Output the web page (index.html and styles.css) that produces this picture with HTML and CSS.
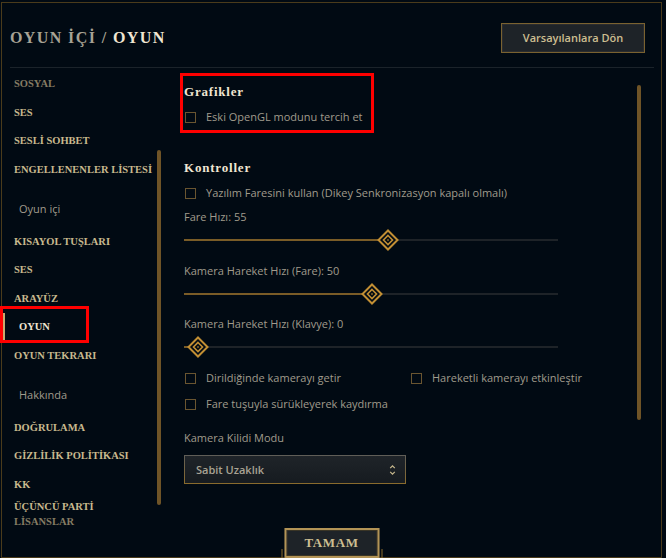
FILE: index.html
```html
<!DOCTYPE html>
<html lang="tr">
<head>
<meta charset="utf-8">
<title>Oyun İçi / Oyun</title>
<link rel="stylesheet" href="styles.css">
</head>
<body>
<div class="frame">
  <header class="header">
    <h1 class="title"><span class="crumb">OYUN İÇİ /</span> <span class="current">OYUN</span></h1>
    <button class="btn-reset">Varsayılanlara Dön</button>
  </header>
  <div class="divider"></div>
  <div class="body">
    <aside class="sidebar">
      <nav class="nav">
        <div class="nav-item dim">SOSYAL</div>
        <div class="nav-item">SES</div>
        <div class="nav-item">SESLİ SOHBET</div>
        <div class="nav-item">ENGELLENENLER LİSTESİ</div>
        <div class="nav-group">Oyun içi</div>
        <div class="nav-item">KISAYOL TUŞLARI</div>
        <div class="nav-item">SES</div>
        <div class="nav-item">ARAYÜZ</div>
        <div class="nav-item active">OYUN</div>
        <div class="nav-item">OYUN TEKRARI</div>
        <div class="nav-group">Hakkında</div>
        <div class="nav-item">DOĞRULAMA</div>
        <div class="nav-item">GİZLİLİK POLİTİKASI</div>
        <div class="nav-item">KK</div>
        <div class="nav-item multi">ÜÇÜNCÜ PARTİ<br><span class="dim">LİSANSLAR</span></div>
      </nav>
      <div class="side-scroll"><div class="thumb side-thumb"></div></div>
    </aside>

    <main class="content">
      <section class="section highlight">
        <h2 class="section-title">Grafikler</h2>
        <label class="check"><span class="box"></span>Eski OpenGL modunu tercih et</label>
      </section>

      <section class="section controls">
        <h2 class="section-title">Kontroller</h2>
        <label class="check"><span class="box"></span>Yazılım Faresini kullan (Dikey Senkronizasyon kapalı olmalı)</label>

        <div class="slider-block first">
          <div class="field-label">Fare Hızı: 55</div>
          <div class="slider" style="--pos: 54.5%">
            <div class="track"><div class="fill"></div></div>
            <svg class="knob" viewBox="0 0 22 22" width="22" height="22"><polygon points="11,1.5 20.5,11 11,20.5 1.5,11" fill="#010a13" stroke="#c28f34" stroke-width="2"/><polygon points="11,6.5 15.5,11 11,15.5 6.5,11" fill="none" stroke="#c28f34" stroke-width="1.6"/><polygon points="11,9.8 12.2,11 11,12.2 9.8,11" fill="#8a6a2c"/></svg>
          </div>
        </div>

        <div class="slider-block">
          <div class="field-label">Kamera Hareket Hızı (Fare): 50</div>
          <div class="slider" style="--pos: 50.3%">
            <div class="track"><div class="fill"></div></div>
            <svg class="knob" viewBox="0 0 22 22" width="22" height="22"><polygon points="11,1.5 20.5,11 11,20.5 1.5,11" fill="#010a13" stroke="#c28f34" stroke-width="2"/><polygon points="11,6.5 15.5,11 11,15.5 6.5,11" fill="none" stroke="#c28f34" stroke-width="1.6"/><polygon points="11,9.8 12.2,11 11,12.2 9.8,11" fill="#8a6a2c"/></svg>
          </div>
        </div>

        <div class="slider-block">
          <div class="field-label">Kamera Hareket Hızı (Klavye): 0</div>
          <div class="slider" style="--pos: 3.7%">
            <div class="track"><div class="fill"></div></div>
            <svg class="knob" viewBox="0 0 22 22" width="22" height="22"><polygon points="11,1.5 20.5,11 11,20.5 1.5,11" fill="#010a13" stroke="#c28f34" stroke-width="2"/><polygon points="11,6.5 15.5,11 11,15.5 6.5,11" fill="none" stroke="#c28f34" stroke-width="1.6"/><polygon points="11,9.8 12.2,11 11,12.2 9.8,11" fill="#8a6a2c"/></svg>
          </div>
        </div>

        <div class="check-grid">
          <label class="check"><span class="box"></span>Dirildiğinde kamerayı getir</label>
          <label class="check"><span class="box"></span>Hareketli kamerayı etkinleştir</label>
          <label class="check"><span class="box"></span>Fare tuşuyla sürükleyerek kaydırma</label>
        </div>

        <div class="field-label lock-label">Kamera Kilidi Modu</div>
        <div class="select">
          <span class="select-value">Sabit Uzaklık</span>
          <svg class="select-arrows" viewBox="0 0 7 12" width="7" height="12"><path d="M1.2 4.2 L3.5 1.8 L5.8 4.2 M1.2 7.8 L3.5 10.2 L5.8 7.8" fill="none" stroke="#c8b98e" stroke-width="1.2"/></svg>
        </div>
      </section>
    </main>

    <div class="main-scroll"><div class="thumb main-thumb"></div></div>
  </div>

  <div class="footer">
    <button class="btn-ok">TAMAM</button>
  </div>
</div>
</body>
</html>
```

FILE: styles.css
```css
*,
*::before,
*::after {
  box-sizing: border-box;
  margin: 0;
  padding: 0;
}

html,
body {
  background: #010a13;
}

body {
  width: 666px;
  height: 558px;
  overflow: hidden;
  font-family: "Open Sans", "Liberation Sans", sans-serif;
  font-size: 11px;
  color: #a09b8c;
}

.frame {
  position: relative;
  margin: 2px 0 0 1px;
  width: 661px;
  height: 556px;
  border: 1px solid #4a3b1b;
  display: flex;
  flex-direction: column;
  background: #010a13;
}

/* Header */
.header {
  height: 64px;
  flex-shrink: 0;
  padding: 5px 16px 0 8px;
  display: flex;
  align-items: center;
  justify-content: space-between;
}

.title {
  font-family: "Liberation Serif", serif;
  font-weight: 700;
  font-size: 16px;
  letter-spacing: 1.4px;
  color: #a7a294;
}

.title .current {
  color: #f0e6d2;
}

.btn-reset {
  width: 144px;
  height: 30px;
  background: #1e2328;
  border: 1px solid #7a6230;
  box-shadow: inset 0 0 0 1px #2a2c2f;
  color: #cdbe91;
  font-family: "Open Sans", sans-serif;
  font-weight: 600;
  font-size: 11px;
}

.divider {
  height: 1px;
  flex-shrink: 0;
  margin: 0 7px 0 8px;
  background: #1b232a;
}

/* Body */
.body {
  flex: 1;
  display: flex;
  min-height: 0;
}

.sidebar {
  width: 168px;
  flex-shrink: 0;
  display: flex;
  padding-right: 9px;
}

.nav {
  width: 155px;
  padding-top: 2px;
}

.nav-item {
  position: relative;
  height: 28.5px;
  line-height: 28.5px;
  padding-left: 12px;
  font-family: "Liberation Serif", serif;
  font-weight: 700;
  font-size: 10.5px;
  color: #c8b98e;
  white-space: nowrap;
}

.nav-item.dim,
.nav-item .dim {
  color: #857c63;
}

.nav-item.active {
  border-left: 3px solid #c8aa6e;
  padding-left: 14px;
  color: #f0e6d2;
}

.nav-item.active::after {
  content: "";
  position: absolute;
  top: -7px;
  left: -5px;
  width: 89px;
  height: 37px;
  border: 3px solid #ff0000;
}

.nav-item.multi {
  height: auto;
  line-height: 15px;
}

.nav-group {
  height: 43.5px;
  padding: 18px 0 0 17px;
  line-height: 14px;
  font-size: 11px;
  color: #a09b8c;
}

.side-scroll {
  width: 4px;
  padding-top: 82px;
}

.thumb {
  width: 4px;
  border-radius: 2px;
  background: #6f5427;
}

.side-thumb {
  height: 355px;
}

.main-scroll {
  width: 4px;
  flex-shrink: 0;
  margin-right: 20px;
  padding-top: 17px;
}

.main-thumb {
  height: 335px;
}

/* Content */
.content {
  flex: 1;
  padding: 5px 0 0 14px;
}

.section-title {
  font-family: "Liberation Serif", serif;
  font-weight: 700;
  font-size: 13px;
  letter-spacing: 0.8px;
  line-height: 16px;
  color: #f0e6d2;
}

.section.highlight {
  width: 194px;
  margin-left: -4px;
  padding: 8px 0 6px 1px;
  border: 3px solid #ff0000;
}

.section.controls {
  margin-top: 27px;
}

.check {
  display: flex;
  align-items: center;
  height: 14px;
  line-height: 14px;
  margin-top: 10px;
  white-space: nowrap;
  color: #a09b8c;
}

.box {
  width: 11px;
  height: 11px;
  margin: 0 10px 0 1px;
  border: 1px solid #6a5530;
  flex-shrink: 0;
}

.field-label {
  height: 14px;
  line-height: 14px;
  color: #a09b8c;
}

.slider-block {
  margin-top: 13.5px;
}

.slider-block.first {
  margin-top: 10px;
}

.slider {
  position: relative;
  width: 374px;
  height: 20px;
  margin-top: 6px;
  display: flex;
  align-items: center;
}

.track {
  width: 100%;
  height: 2px;
  background: #1e2328;
}

.fill {
  width: var(--pos);
  height: 2px;
  background: #7a5c27;
}

.knob {
  position: absolute;
  top: -1px;
  left: calc(var(--pos) - 11px);
}

.check-grid {
  display: grid;
  grid-template-columns: 226px auto;
  row-gap: 12px;
  margin-top: 14px;
}

.check-grid .check {
  margin-top: 0;
}

.lock-label {
  margin-top: 20px;
}

.select {
  width: 222px;
  height: 29px;
  margin-top: 10px;
  display: flex;
  align-items: center;
  justify-content: space-between;
  padding: 0 9px 0 11px;
  border: 1px solid;
  border-image: linear-gradient(to bottom, #5f5e59, #8a6b2c) 1;
  background: linear-gradient(to bottom, #1f2429, #161b20);
}

.select-value {
  font-weight: 600;
  color: #a9a393;
}

/* Footer */
.footer {
  position: absolute;
  left: 50%;
  bottom: -1px;
  transform: translateX(-50%);
  padding: 0 3px;
}

.footer::before,
.footer::after {
  content: "";
  position: absolute;
  bottom: 0;
  width: 1px;
  height: 9px;
  background: #8a6b2c;
}

.footer::before {
  left: 0;
}

.footer::after {
  right: 0;
}

.btn-ok {
  display: block;
  width: 95px;
  height: 30px;
  background: #1e2328;
  border: 2px solid #b39456;
  box-shadow: inset 0 0 0 1px #3a3526;
  color: #cdbe91;
  font-family: "Liberation Serif", serif;
  font-weight: 700;
  font-size: 13px;
  letter-spacing: 0.6px;
}
```
